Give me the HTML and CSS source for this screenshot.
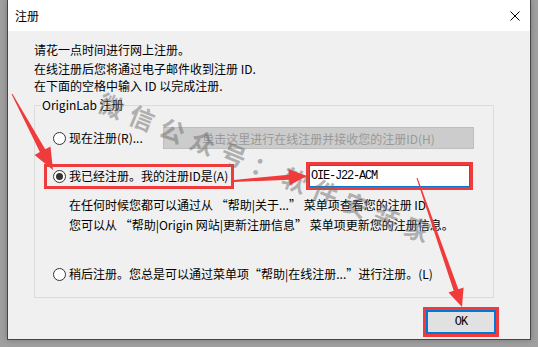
FILE: index.html
```html
<!DOCTYPE html>
<html lang="zh-CN">
<head>
    <meta charset="UTF-8">
    <meta name="viewport" content="width=device-width, initial-scale=1.0">
    <title>注册</title>
    <link rel="stylesheet" href="styles.css">
</head>
<body>
    <div class="dialog">
        <div class="titlebar">
            <span class="title">注册</span>
            <svg class="close" width="10" height="10" viewBox="0 0 10 10">
                <path d="M0.5 0.5 L9.5 9.5 M9.5 0.5 L0.5 9.5" stroke="#000" stroke-width="1" fill="none"/>
            </svg>
        </div>
        <div class="content">
            <p class="intro">请花一点时间进行网上注册。</p>
            <div class="intro-sub">
                <p>在线注册后您将通过电子邮件收到注册 ID.</p>
                <p>在下面的空格中输入 ID 以完成注册.</p>
            </div>

            <div class="group">
                <span class="group-label">OriginLab 注册</span>

                <div class="row row-now">
                    <label class="radio"><span class="dot"></span>现在注册(R)...</label>
                    <button class="btn-online" disabled>单击这里进行在线注册并接收您的注册ID(H)</button>
                </div>

                <div class="row row-have">
                    <label class="radio mark label-mark"><span class="dot checked"></span>我已经注册。我的注册ID是(A)</label>
                    <div class="mark id-box"><input class="id-input" type="text" value="OIE-J22-ACM"></div>
                </div>

                <div class="hint">
                    在任何时候您都可以通过从 “帮助|关于...” 菜单项查看您的注册 ID.<br>
                    您可以从 “帮助|Origin 网站|更新注册信息” 菜单项更新您的注册信息。
                </div>

                <div class="row row-later">
                    <label class="radio"><span class="dot"></span>稍后注册。您总是可以通过菜单项“帮助|在线注册...”进行注册。(L)</label>
                </div>
            </div>

            <div class="actions">
                <div class="mark ok-mark"><button class="btn-ok">OK</button></div>
            </div>
        </div>
    </div>

    <div class="watermark">微信公众号：软件安装家</div>

    <svg class="arrows" width="538" height="347" viewBox="0 0 538 347">
        <polygon points="12.4,93.8 45.2,149.2 50.5,146.4 53,170 34.6,154.9 39.9,152.1 11.6,94.2"/>
        <polygon points="233.9,180 288.9,174.7 288.5,169.3 307,176 289.6,185.2 289.2,179.7 234.1,182"/>
        <polygon points="417.5,177.8 458.4,289.2 463.6,287.4 462,307 448.5,292.6 453.7,290.8 416.5,178.2"/>
    </svg>
</body>
</html>
```

FILE: styles.css
```css
html, body {
    margin: 0;
    background: #a0a0a0;
}
body {
    font-family: "Noto Sans CJK SC", sans-serif;
    font-size: 12px;
    color: #000;
    position: relative;
    width: 538px;
    height: 347px;
    overflow: hidden;
}
.dialog {
    margin-left: 7px;
    width: 524px;
    height: 340px;
    box-sizing: border-box;
    border: 1px solid #454545;
    border-top: none;
    box-shadow: 0 0 6px rgba(0,0,0,0.25);
    display: flex;
    flex-direction: column;
}
.titlebar {
    height: 31px;
    background: #fff;
    display: flex;
    align-items: center;
    justify-content: space-between;
    padding: 0 10px 0 7px;
    flex-shrink: 0;
}
.title {
    line-height: 14px;
}
.close {
    display: block;
}
.content {
    flex: 1;
    background: #f0f0f0;
    padding: 12px 31px 0 26px;
}
.intro {
    margin: 0;
    line-height: 14px;
}
.intro-sub {
    margin-top: 3px;
}
.intro-sub p {
    margin: 0;
    line-height: 17px;
}
.group {
    position: relative;
    width: 460px;
    box-sizing: border-box;
    margin-top: 11px;
    border: 1px solid #dcdcdc;
    padding: 21px 19px 14px 18px;
}
.group-label {
    position: absolute;
    top: -8px;
    left: 6px;
    padding: 0 1px;
    line-height: 14px;
    background: #f0f0f0;
}
.row {
    display: flex;
    align-items: center;
}
.radio {
    display: flex;
    align-items: center;
    line-height: 14px;
    white-space: nowrap;
}
.dot {
    width: 13px;
    height: 13px;
    box-sizing: border-box;
    border: 1px solid #333;
    border-radius: 50%;
    background: #fff;
    margin-right: 3px;
    display: flex;
    align-items: center;
    justify-content: center;
}
.dot.checked::after {
    content: "";
    width: 7px;
    height: 7px;
    border-radius: 50%;
    background: #333;
}
.row-now {
    height: 22px;
}
.btn-online {
    margin-left: auto;
    width: 311px;
    height: 22px;
    background: #cccccc;
    border: 1px solid #bfbfbf;
    color: #999;
    font-family: inherit;
    font-size: 12px;
    padding: 0;
}
.row-have {
    height: 28px;
    margin-top: 13px;
}
.mark {
    border: 3px solid #ef3b3b;
    box-sizing: border-box;
}
.label-mark {
    margin-left: -9px;
    height: 25px;
    padding: 0 3px 0 6px;
}
.id-box {
    margin-left: auto;
    margin-right: 1px;
    width: 167px;
    height: 28px;
    background: #f0f0f0;
}
.id-input {
    display: block;
    width: 100%;
    height: 100%;
    box-sizing: border-box;
    border: 1px solid #0078d7;
    background: #fff;
    padding: 0 0 0 1px;
    margin: 0;
    font-family: "Liberation Mono", monospace;
    font-size: 12px;
    letter-spacing: -1.2px;
    color: #000;
    outline: none;
}
.hint {
    margin-top: 5px;
    padding-left: 16px;
    line-height: 20px;
}
.row-later {
    height: 18px;
    margin-top: 30px;
}
.actions {
    display: flex;
    justify-content: flex-end;
    margin-top: 9px;
}
.ok-mark {
    width: 76px;
    height: 30px;
}
.btn-ok {
    display: block;
    width: 70px;
    height: 24px;
    border: 2px solid #0078d7;
    background: #e1e1e1;
    font-family: "Liberation Mono", monospace;
    font-size: 12px;
    letter-spacing: -1px;
    padding: 0;
    color: #000;
}
.watermark {
    position: absolute;
    left: 100px;
    top: 88px;
    font-size: 25px;
    line-height: 25px;
    letter-spacing: 8px;
    font-weight: bold;
    white-space: nowrap;
    color: rgba(110,110,110,0.5);
    transform: rotate(22deg);
    transform-origin: 0 50%;
    pointer-events: none;
}
.arrows {
    position: absolute;
    left: 0;
    top: 0;
    fill: #ef3b3b;
    pointer-events: none;
}
```
